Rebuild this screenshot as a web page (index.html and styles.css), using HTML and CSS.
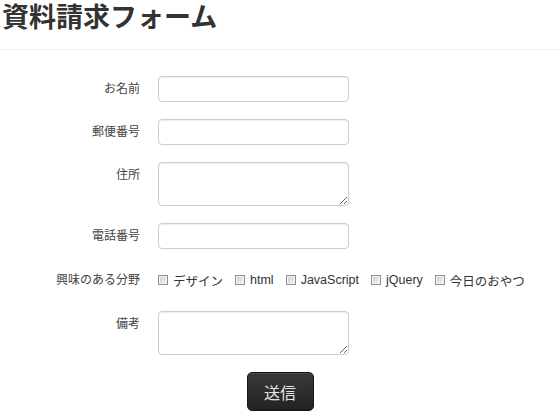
FILE: index.html
```html
<!DOCTYPE html>
<html lang="ja">
<head>
<meta charset="utf-8">
<title>資料請求フォーム</title>
<link rel="stylesheet" href="styles.css">
</head>
<body>
<h1 class="title">資料請求フォーム</h1>
<form class="form">
  <label class="label">お名前</label>
  <div class="control"><input class="field" type="text"></div>

  <label class="label">郵便番号</label>
  <div class="control"><input class="field" type="text"></div>

  <label class="label">住所</label>
  <div class="control"><textarea class="field area"></textarea></div>

  <label class="label">電話番号</label>
  <div class="control"><input class="field" type="text"></div>

  <span class="label label-checks">興味のある分野</span>
  <div class="control checks">
    <label class="check"><input class="box" type="checkbox">デザイン</label>
    <label class="check"><input class="box" type="checkbox">html</label>
    <label class="check"><input class="box" type="checkbox">JavaScript</label>
    <label class="check"><input class="box" type="checkbox">jQuery</label>
    <label class="check"><input class="box" type="checkbox">今日のおやつ</label>
  </div>

  <label class="label">備考</label>
  <div class="control"><textarea class="field area"></textarea></div>

  <div class="actions"><button class="submit" type="button">送信</button></div>
</form>
</body>
</html>
```
FILE: styles.css
```css
html, body {
  margin: 0;
  padding: 0;
  background: #fff;
}

body {
  font-family: "Liberation Sans", "Noto Sans CJK JP", sans-serif;
  color: #333;
}

.title {
  margin: 0;
  padding: 3px 0 16px 2px;
  font-family: "Liberation Sans", "Noto Sans CJK JP", sans-serif;
  font-size: 27px;
  line-height: 30px;
  font-weight: bold;
  color: #333;
  border-bottom: 1px solid #eeeeee;
}

.form {
  display: grid;
  grid-template-columns: 140px 1fr;
  column-gap: 18px;
  row-gap: 17px;
  padding-top: 26px;
}

.label {
  text-align: right;
  font-size: 12px;
  line-height: 26px;
  color: #444;
  align-self: start;
}

.label-checks {
  line-height: 28px;
}

.control {
  display: flex;
  align-items: flex-start;
}

.field {
  box-sizing: border-box;
  width: 191px;
  height: 26px;
  margin: 0;
  padding: 3px 6px;
  border: 1px solid #cccccc;
  border-radius: 4px;
  background: #fff;
  box-shadow: inset 0 1px 1px rgba(0, 0, 0, 0.075);
  font-family: inherit;
  font-size: 12px;
}

.area {
  height: 44px;
  resize: both;
}

.checks {
  height: 28px;
  align-items: center;
}

.check {
  display: inline-flex;
  align-items: center;
  gap: 5px;
  margin-right: 12px;
  font-size: 12.5px;
  color: #333;
}

.box {
  appearance: none;
  -webkit-appearance: none;
  box-sizing: border-box;
  width: 10px;
  height: 10px;
  margin: 0;
  border: 1px solid #8f8f8f;
  background: linear-gradient(135deg, #cfcfcf 0%, #e6e6e6 60%, #f4f4f4 100%);
  box-shadow: inset 0 0 0 1px #f2f2f2;
}

.actions {
  grid-column: 1 / -1;
  display: flex;
  justify-content: center;
}

.submit {
  width: 67px;
  height: 39px;
  margin: 0;
  padding: 0;
  border: 1px solid #151515;
  border-radius: 5px;
  background: linear-gradient(#3a3a3a, #222222);
  color: #e6e6e6;
  font-family: "Noto Sans CJK JP", sans-serif;
  font-size: 16px;
  box-shadow: inset 0 1px 0 rgba(255, 255, 255, 0.08);
}
```
